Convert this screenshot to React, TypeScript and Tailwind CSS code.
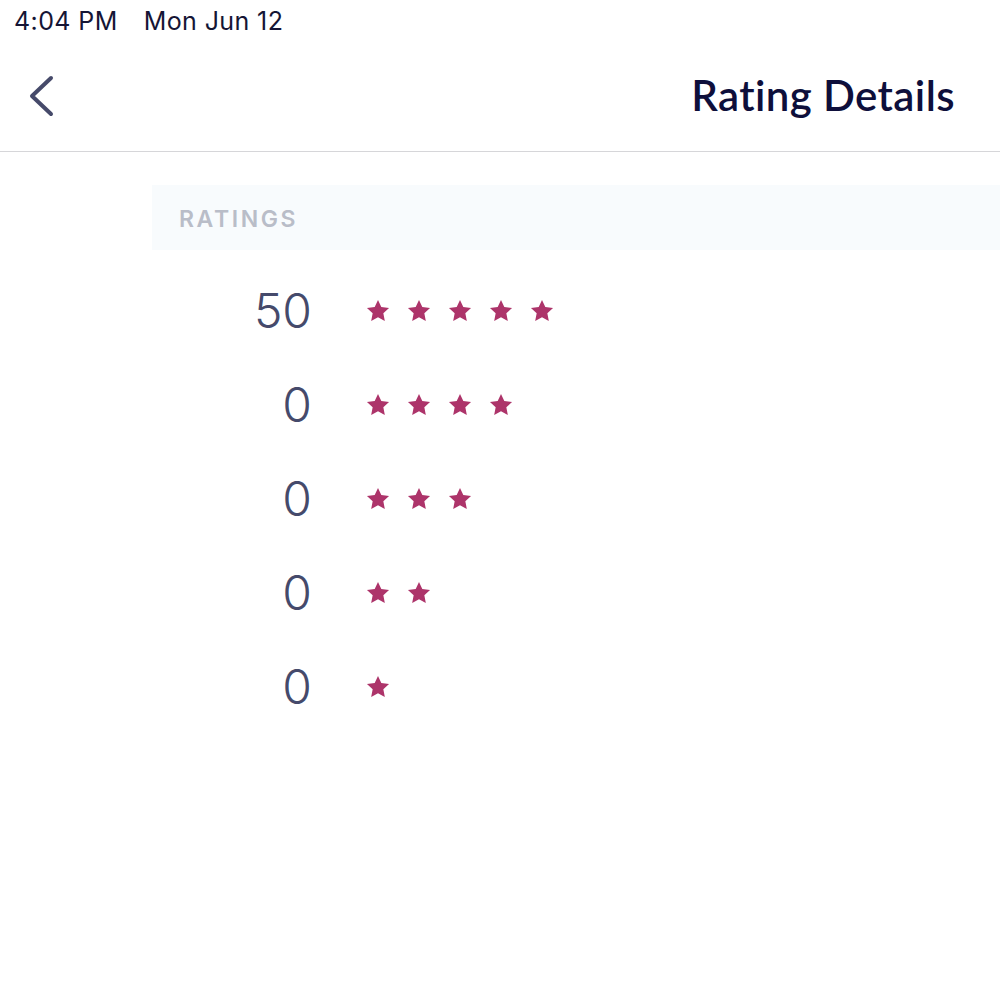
const rows = [
  { count: 50, stars: 5 },
  { count: 0, stars: 4 },
  { count: 0, stars: 3 },
  { count: 0, stars: 2 },
  { count: 0, stars: 1 },
];

function Star() {
  return (
    <svg viewBox="0 0 24 24" className="w-[26px] h-[26px]" fill="#ad346a">
      <path d="M12 1.8l3.05 6.55 7.15.86-5.28 4.93 1.38 7.06L12 17.7l-6.3 3.5 1.38-7.06L1.8 9.21l7.15-.86z" />
    </svg>
  );
}

export default function App() {
  return (
    <div className="w-[1000px] h-[1000px] bg-white" style={{ fontFamily: "Lato, 'Noto Sans', sans-serif" }}>
      <div className="h-[40px] flex items-center pl-[14px] pt-[3px] gap-[26px] text-[25px] tracking-[0.4px] text-[#151535]" style={{ fontFamily: "Inter, Roboto, sans-serif" }}>
        <span>4:04 PM</span>
        <span>Mon Jun 12</span>
      </div>

      <div className="h-[112px] flex items-center justify-between pl-[28px] pr-[45px] border-b border-[#d6d6d9]">
        <svg viewBox="0 0 26 42" className="w-[26px] h-[42px]" fill="none" stroke="#464a6a" strokeWidth="4" strokeLinecap="round" strokeLinejoin="round">
          <path d="M23 3 L4 21 L23 39" />
        </svg>
        <h1 className="text-[42px] font-semibold text-[#0e0f3b] tracking-[0.4px]">Rating Details</h1>
      </div>

      <div className="pt-[33px]">
        <div className="ml-[152px] h-[65px] bg-[#f8fbfd] flex items-center pl-[27px] pt-[3px]">
          <span className="text-[23px] font-semibold tracking-[2.6px] text-[#b9bdc8]" style={{ fontFamily: "Inter, sans-serif" }}>RATINGS</span>
        </div>

        <div className="pt-[14px]">
          {rows.map((r, i) => (
            <div key={i} className="h-[94px] flex items-center">
              <span className="w-[312px] text-right text-[48px] font-light text-[#454a6b] leading-none" style={{ fontFamily: "Inter, sans-serif" }}>{r.count}</span>
              <div className="ml-[53px] flex gap-[15px]">
                {Array.from({ length: r.stars }).map((_, j) => (
                  <Star key={j} />
                ))}
              </div>
            </div>
          ))}
        </div>
      </div>
    </div>
  );
}
